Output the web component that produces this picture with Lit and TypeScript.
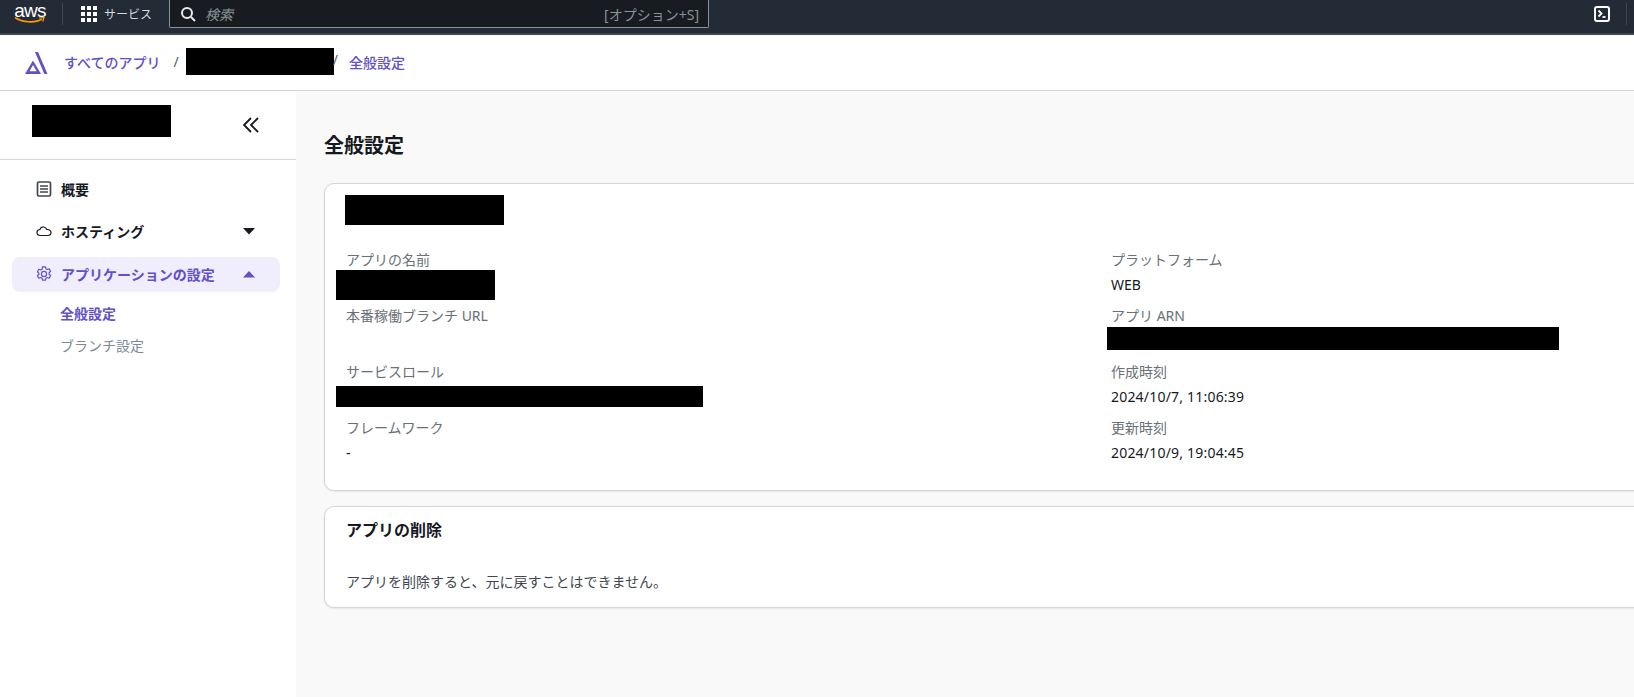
import { LitElement, html, css } from "lit";
import { customElement } from "lit/decorators.js";

@customElement("app-root")
export class AppRoot extends LitElement {
  static styles = css`
    :host { display: block; width: 1634px; height: 697px; overflow: hidden; background: #fff; font-family: "Noto Sans", "Noto Sans CJK JP", sans-serif; font-size: 14px; color: #16191f; }
    * { box-sizing: border-box; }
    .redact { background: #000; display: block; flex: none; }
    .top { height: 35px; background: #232b37; border-bottom: 2px solid #3f4650; display: flex; align-items: flex-start; color: #d5dbdb; }
    .aws { width: 32px; margin: 1px 0 0 14px; height: 27px; flex: none; }
    .aws-t { font: 400 19px/20px "Liberation Sans", sans-serif; color: #fff; letter-spacing: -0.8px; display: block; text-align: center; height: 16px; }
    .aws svg { display: block; margin: 0 auto 0; }
    .sep { width: 1px; height: 22px; background: #3f4650; margin: 3px 18px 0 16px; flex: none; }
    .svc { display: flex; align-items: center; gap: 7px; height: 28px; font-size: 12px; color: #d5dbdb; width: 87px; flex: none; }
    .dots { display: grid; grid-template-columns: repeat(3, 4px); gap: 2px; }
    .dots i { width: 4px; height: 4px; background: #fff; display: block; }
    .search { margin-left: 1px; width: 540px; height: 28px; background: #181b20; border: 1px solid #879596; border-top: none; border-radius: 0 0 2px 2px; display: flex; align-items: center; padding: 0 9px 0 10px; flex: none; }
    .search svg { margin-right: 9px; flex: none; }
    .ph { font-style: italic; color: #879596; font-size: 14px; flex: 1; }
    .hint { color: #879596; font-size: 14px; }
    .top-right { margin-left: auto; display: flex; align-items: flex-start; }
    .term { margin: 6px 16px 0 0; display: block; }
    .tsep { width: 1px; height: 22px; background: #3f4650; margin: 3px 7px 0 0; }
    .crumbs { height: 56px; border-bottom: 1px solid #d5d5d5; display: flex; align-items: center; padding: 0 0 2px 25px; font-size: 14px; }
    .crumbs a { color: #6150c7; font-weight: 500; }
    .crumbs .logo { margin: 3px 16px 0 0; flex: none; }
    .slash { color: #545b64; }
    .s1 { margin: 0 7px 0 13px; }
    .s2 { margin: 0 11px 0 -1px; transform: translateY(-2px); }
    .body { display: flex; height: 606px; }
    .side { width: 296px; flex: none; background: #fff; box-shadow: 2px 0 4px rgba(0,0,0,0.03); }
    .side-h { height: 69px; border-bottom: 1px solid #d5d5d5; padding: 14px 37px 0 32px; display: flex; justify-content: space-between; align-items: flex-start; }
    .side-h .redact { width: 139px; height: 32px; }
    .side-h svg { margin-top: 12px; }
    .nav { padding: 12px 16px 0 12px; display: flex; flex-direction: column; }
    .item { height: 34px; margin-bottom: 8px; display: flex; align-items: center; padding: 0 25px 0 24px; border-radius: 8px; font-weight: 700; font-size: 14px; color: #16191f; }
    .item svg.ic { margin-right: 9px; flex: none; width: 16px; }
    .item span { flex: 1; }
    .item.on { background: #f0edfc; color: #6150c7; height: 35px; margin-top: 1px; margin-bottom: 6px; padding-bottom: 1px; font-weight: 600; }
    .sub { padding-left: 48px; font-size: 14px; line-height: 32px; color: #7d8998; }
    .sub.on { color: #6150c7; font-weight: 600; }
    .main { flex: 1; background: #f9f9f9; padding: 40px 0 0 28px; min-width: 0; }
    h1 { margin: 0 0 23px; font-size: 20px; line-height: 30px; font-weight: 700; height: 29px; }
    .card { width: 1320px; background: #fff; border: 1px solid #d5d5d5; border-radius: 10px; box-shadow: 0 1px 2px rgba(0,0,0,0.08); }
    .c1 { height: 308px; padding: 11px 21px 0 21px; }
    .c1 .title { width: 159px; height: 30px; margin: 0 0 22px -1px; }
    .grid { display: grid; grid-template-columns: 765px 1fr; grid-auto-rows: 56px; }
    .cell { padding-right: 10px; }
    .lab { color: #687078; font-size: 14px; line-height: 26px; height: 26px; }
    .val { font-size: 14px; line-height: 23px; }
    .date { letter-spacing: 0.2px; }
    .cell .redact { margin-left: -10px; }
    .cell .redact.arn { margin-left: -4px; margin-top: -2px; }
    .c2 { margin-top: 15px; height: 102px; padding: 11px 21px; }
    h2 { margin: 0; font-size: 16px; font-weight: 700; line-height: 24px; }
    .c2 p { margin: 28px 0 0; font-size: 14px; line-height: 24px; color: #414750; }
  `;

  render() {
    const rows: [string, any][] = [
      ["アプリの名前", html`<div class="redact" style="width:159px;height:30px;margin-top:-3px"></div>`],
      ["プラットフォーム", html`<div class="val">WEB</div>`],
      ["本番稼働ブランチ URL", html``],
      ["アプリ ARN", html`<div class="redact arn" style="width:452px;height:23px"></div>`],
      ["サービスロール", html`<div class="redact" style="width:367px;height:21px;margin-top:1px"></div>`],
      ["作成時刻", html`<div class="val date">2024/10/7, 11:06:39</div>`],
      ["フレームワーク", html`<div class="val">-</div>`],
      ["更新時刻", html`<div class="val date">2024/10/9, 19:04:45</div>`],
    ];
    return html`
      <div class="top">
        <div class="aws">
          <span class="aws-t">aws</span>
          <svg width="32" height="8" viewBox="0 0 32 8"><path d="M1 .5C8 5.500 21 6.500 28 2" fill="none" stroke="#ff9900" stroke-width="1.6"/><path d="M25 1l5-.5-1.200 4" fill="none" stroke="#ff9900" stroke-width="1.200"/></svg>
        </div>
        <div class="sep"></div>
        <div class="svc">
          <div class="dots">${Array.from({ length: 9 }, () => html`<i></i>`)}</div>
          <span>サービス</span>
        </div>
        <div class="search">
          <svg width="16" height="16" viewBox="0 0 16 16" fill="none" stroke="#e9ebed" stroke-width="2"><circle cx="7" cy="7" r="5"/><path d="M11 11l4 4"/></svg>
          <span class="ph">検索</span>
          <span class="hint">[オプション+S]</span>
        </div>
        <div class="top-right">
          <svg class="term" width="16" height="16" viewBox="0 0 16 16" fill="none" stroke="#fff"><rect x="1" y="1" width="14" height="14" rx="2" stroke-width="2"/><path d="M4.500 4.500L7.500 7.500l-3 3" stroke-width="1.800"/><path d="M8.500 11h3" stroke-width="1.800"/></svg>
          <div class="tsep"></div>
        </div>
      </div>
      <div class="crumbs">
        <svg class="logo" width="23" height="23" viewBox="0 0 23 23" fill="#6150c7"><path d="M10 0h3l9.500 22h-3.200z"/><path fill-rule="evenodd" d="M0 22L8 8.500 16 22zM4.500 19.300h7.200L8 13z"/></svg>
        <a>すべてのアプリ</a>
        <span class="slash s1">/</span>
        <div class="redact" style="width:148px;height:27px"></div>
        <span class="slash s2">/</span>
        <a>全般設定</a>
      </div>
      <div class="body">
        <div class="side">
          <div class="side-h">
            <div class="redact"></div>
            <svg width="16" height="16" viewBox="0 0 16 16" fill="none" stroke="#16191f" stroke-width="1.800"><path d="M8 1L1 8l7 7"/><path d="M15 1L8 8l7 7"/></svg>
          </div>
          <div class="nav">
            <div class="item">
              <svg class="ic" width="16" height="16" viewBox="0 0 16 16" fill="none" stroke="#414750" stroke-width="1.700"><rect x="1.500" y="1" width="13" height="14" rx="1.500"/><path d="M4 5h8M4 8h8M4 11h8" stroke-width="1.400"/></svg>
              <span>概要</span>
            </div>
            <div class="item">
              <svg class="ic" width="16" height="16" viewBox="0 0 16 16" fill="none" stroke="#16191f" stroke-width="1.200"><path d="M4.500 12.500C2.300 12.500 1 11.200 1 9.500S2.300 6.700 3.800 6.500C4.500 4.700 6 3.800 7.700 4c1.500.2 2.700 1.200 3.200 2.500 2.300-.2 4.100 1 4.100 3s-1.600 3-3.600 3z"/></svg>
              <span>ホスティング</span>
              <svg width="12" height="7" viewBox="0 0 12 7"><path d="M0 0h12L6 6.500z" fill="#16191f"/></svg>
            </div>
            <div class="item on">
              <svg class="ic" width="16" height="16" viewBox="0 0 16 16" fill="none" stroke="#6150c7" stroke-width="1.200" stroke-linejoin="round"><circle cx="8" cy="8" r="2.600"/><path d="M6.500.8h3l.4 2 1.300.7 1.900-.7 1.500 2.600-1.500 1.400v1.400l1.500 1.400-1.500 2.600-1.900-.7-1.300.7-.4 2h-3l-.4-2-1.300-.7-1.900.7-1.500-2.600 1.500-1.400V7.300L1.400 5.900l1.500-2.600 1.900.7 1.300-.7z"/></svg>
              <span>アプリケーションの設定</span>
              <svg width="12" height="7" viewBox="0 0 12 7"><path d="M0 6.500h12L6 0z" fill="#6150c7"/></svg>
            </div>
            <div class="sub on">全般設定</div>
            <div class="sub">ブランチ設定</div>
          </div>
        </div>
        <div class="main">
          <h1>全般設定</h1>
          <div class="card c1">
            <div class="redact title"></div>
            <div class="grid">
              ${rows.map(([l, v]) => html`<div class="cell"><div class="lab">${l}</div>${v}</div>`)}
            </div>
          </div>
          <div class="card c2">
            <h2>アプリの削除</h2>
            <p>アプリを削除すると、元に戻すことはできません。</p>
          </div>
        </div>
      </div>
    `;
  }
}
